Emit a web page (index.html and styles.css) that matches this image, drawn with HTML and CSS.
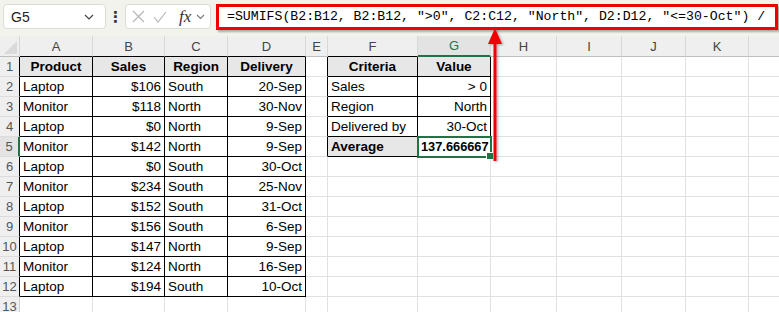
FILE: index.html
```html
<!DOCTYPE html>
<html lang="en">
<head>
    <meta charset="UTF-8">
    <title>SUMIFS average</title>
    <link rel="stylesheet" href="styles.css">
</head>
<body>
<div class="page">
    <!-- formula bar -->
    <div class="bar">
        <div class="namebox">
            <span>G5</span>
            <svg width="10" height="6" viewBox="0 0 10 6"><polyline points="1,1 5,5 9,1" fill="none" stroke="#444" stroke-width="1.2"/></svg>
        </div>
        <div class="dots">&#8942;</div>
        <div class="fxbox">
            <svg width="13" height="13" viewBox="0 0 13 13"><path d="M1 1 L12 12 M12 1 L1 12" stroke="#b4b4b4" stroke-width="1.1" fill="none"/></svg>
            <svg width="14" height="12" viewBox="0 0 14 12"><polyline points="1,6 5,11 13,1" fill="none" stroke="#b4b4b4" stroke-width="1.1"/></svg>
            <span class="fx">fx</span>
            <svg width="9" height="6" viewBox="0 0 9 6"><polyline points="1,1 4.5,4.5 8,1" fill="none" stroke="#777" stroke-width="1.1"/></svg>
        </div>
        <div class="formula">=SUMIFS(B2:B12, B2:B12, "&gt;0", C2:C12, "North", D2:D12, "&lt;=30-Oct") /</div>
    </div>

    <!-- sheet -->
    <div class="sheet">
        <div class="corner"><i></i></div>
        <div class="ch bb">A</div><div class="ch bb">B</div><div class="ch bb">C</div><div class="ch bb">D</div><div class="ch">E</div>
        <div class="ch bb">F</div><div class="ch on">G</div><div class="ch">H</div><div class="ch">I</div><div class="ch">J</div><div class="ch">K</div><div class="ch"></div>

        <div class="rn bl">1</div>
        <div class="c t th">Product</div><div class="c t th">Sales</div><div class="c t th">Region</div><div class="c t th">Delivery</div><div class="c bl"></div>
        <div class="c t th">Criteria</div><div class="c t th">Value</div>
        <div class="c"></div><div class="c"></div><div class="c"></div><div class="c"></div><div class="c"></div>

        <div class="rn bl">2</div>
        <div class="c t">Laptop</div><div class="c t r">$106</div><div class="c t">South</div><div class="c t r">20-Sep</div><div class="c bl"></div>
        <div class="c t">Sales</div><div class="c t r">&gt; 0</div>
        <div class="c"></div><div class="c"></div><div class="c"></div><div class="c"></div><div class="c"></div>

        <div class="rn bl">3</div>
        <div class="c t">Monitor</div><div class="c t r">$118</div><div class="c t">North</div><div class="c t r">30-Nov</div><div class="c bl"></div>
        <div class="c t">Region</div><div class="c t r">North</div>
        <div class="c"></div><div class="c"></div><div class="c"></div><div class="c"></div><div class="c"></div>

        <div class="rn bl">4</div>
        <div class="c t">Laptop</div><div class="c t r">$0</div><div class="c t">North</div><div class="c t r">9-Sep</div><div class="c bl"></div>
        <div class="c t">Delivered by</div><div class="c t r">30-Oct</div>
        <div class="c"></div><div class="c"></div><div class="c"></div><div class="c"></div><div class="c"></div>

        <div class="rn bl on">5</div>
        <div class="c t">Monitor</div><div class="c t r">$142</div><div class="c t">North</div><div class="c t r">9-Sep</div><div class="c bl"></div>
        <div class="c t th left">Average</div><div class="c t r b sel">137.666667</div>
        <div class="c"></div><div class="c"></div><div class="c"></div><div class="c"></div><div class="c"></div>

        <div class="rn bl">6</div>
        <div class="c t">Laptop</div><div class="c t r">$0</div><div class="c t">South</div><div class="c t r">30-Oct</div><div class="c"></div>
        <div class="c"></div><div class="c"></div>
        <div class="c"></div><div class="c"></div><div class="c"></div><div class="c"></div><div class="c"></div>

        <div class="rn bl">7</div>
        <div class="c t">Monitor</div><div class="c t r">$234</div><div class="c t">South</div><div class="c t r">25-Nov</div><div class="c"></div>
        <div class="c"></div><div class="c"></div>
        <div class="c"></div><div class="c"></div><div class="c"></div><div class="c"></div><div class="c"></div>

        <div class="rn bl">8</div>
        <div class="c t">Laptop</div><div class="c t r">$152</div><div class="c t">South</div><div class="c t r">31-Oct</div><div class="c"></div>
        <div class="c"></div><div class="c"></div>
        <div class="c"></div><div class="c"></div><div class="c"></div><div class="c"></div><div class="c"></div>

        <div class="rn bl">9</div>
        <div class="c t">Monitor</div><div class="c t r">$156</div><div class="c t">South</div><div class="c t r">6-Sep</div><div class="c"></div>
        <div class="c"></div><div class="c"></div>
        <div class="c"></div><div class="c"></div><div class="c"></div><div class="c"></div><div class="c"></div>

        <div class="rn bl">10</div>
        <div class="c t">Laptop</div><div class="c t r">$147</div><div class="c t">North</div><div class="c t r">9-Sep</div><div class="c"></div>
        <div class="c"></div><div class="c"></div>
        <div class="c"></div><div class="c"></div><div class="c"></div><div class="c"></div><div class="c"></div>

        <div class="rn bl">11</div>
        <div class="c t">Monitor</div><div class="c t r">$124</div><div class="c t">North</div><div class="c t r">16-Sep</div><div class="c"></div>
        <div class="c"></div><div class="c"></div>
        <div class="c"></div><div class="c"></div><div class="c"></div><div class="c"></div><div class="c"></div>

        <div class="rn bl">12</div>
        <div class="c t">Laptop</div><div class="c t r">$194</div><div class="c t">South</div><div class="c t r">10-Oct</div><div class="c"></div>
        <div class="c"></div><div class="c"></div>
        <div class="c"></div><div class="c"></div><div class="c"></div><div class="c"></div><div class="c"></div>

        <div class="rn">13</div>
        <div class="c"></div><div class="c"></div><div class="c"></div><div class="c"></div><div class="c"></div>
        <div class="c"></div><div class="c"></div>
        <div class="c"></div><div class="c"></div><div class="c"></div><div class="c"></div><div class="c"></div>
    </div>

    <!-- annotation arrow pointing at the formula -->
    <svg class="arrow" width="779" height="312" viewBox="0 0 779 312">
        <defs>
            <filter id="sh" x="-50%" y="-10%" width="200%" height="120%">
                <feDropShadow dx="1.5" dy="1" stdDeviation="0.8" flood-color="#000" flood-opacity="0.3"/>
            </filter>
        </defs>
        <g filter="url(#sh)">
            <line x1="495" y1="40" x2="495" y2="161" stroke="#f00000" stroke-width="3"/>
            <polygon points="495,28 488,44 502,44" fill="#f00000"/>
        </g>
    </svg>
</div>
</body>
</html>
```

FILE: styles.css
```css
* {
    margin: 0;
    padding: 0;
    box-sizing: border-box;
}
body {
    width: 779px;
    height: 312px;
    overflow: hidden;
    background-color: #ffffff;
    font-family: "Liberation Sans", "DejaVu Sans", sans-serif;
    color: #000000;
}
.page {
    position: relative;
}

/* formula bar */
.bar {
    height: 36px;
    background-color: #f3f3ee;
    display: flex;
    align-items: flex-start;
    padding: 4px 0 0 3px;
}
.namebox {
    width: 103px;
    height: 25px;
    background-color: #ffffff;
    border: 1px solid #dcdcd6;
    border-radius: 4px;
    display: flex;
    align-items: center;
    justify-content: space-between;
    padding: 0 11px 0 7px;
    font-size: 14px;
    color: #222;
}
.dots {
    width: 19px;
    height: 25px;
    display: flex;
    align-items: center;
    justify-content: center;
    font-size: 15px;
    font-weight: bold;
    color: #333;
}
.fxbox {
    width: 86px;
    height: 25px;
    background-color: #ffffff;
    border: 1px solid #dcdcd6;
    border-radius: 4px;
    display: flex;
    align-items: center;
    gap: 8px;
    padding-left: 6px;
}
.fx {
    font-family: "Liberation Serif", serif;
    font-style: italic;
    font-size: 17px;
    color: #333;
    margin-left: 4px;
    margin-right: -3px;
}
.formula {
    width: 562px;
    height: 26px;
    margin-left: 5px;
    background-color: #ffffff;
    border: 3px solid #f00000;
    box-shadow: 2px 2px 2px rgba(0,0,0,0.3);
    font-family: "Liberation Mono", "DejaVu Sans Mono", monospace;
    font-size: 13.2px;
    line-height: 19px;
    padding-left: 8px;
    white-space: nowrap;
    overflow: hidden;
}

/* sheet grid */
.sheet {
    display: grid;
    grid-template-columns: 20px 73px 72px 63px 78px 22px 90px 73px 66px 65px 64px 63px 64px;
    grid-template-rows: 21px;
    grid-auto-rows: 20px;
    width: 813px;
}
.corner {
    background-color: #efefef;
    border-right: 1px solid #d6d6d6;
    border-bottom: 1px solid #bdbdbd;
    display: flex;
    align-items: flex-end;
    justify-content: flex-end;
    padding: 0 2px 2px 0;
}
.corner i {
    width: 0;
    height: 0;
    border-left: 13px solid transparent;
    border-bottom: 13px solid #dadada;
}
.ch {
    background-color: #efefef;
    border-right: 1px solid #d8d8d8;
    border-bottom: 1px solid #bdbdbd;
    display: flex;
    align-items: center;
    justify-content: center;
    font-size: 13px;
    color: #444;
}
.ch.bb {
    border-bottom-color: #000;
}
.ch.on {
    background-color: #e3e3e3;
    color: #217346;
    border-bottom: 2px solid #217346;
}
.rn {
    background-color: #efefef;
    border-right: 1px solid #d0d0d0;
    border-bottom: 1px solid #dcdcdc;
    display: flex;
    align-items: center;
    justify-content: center;
    font-size: 13px;
    color: #555;
}
.rn.on {
    background-color: #e3e3e3;
}
.c {
    border-right: 1px solid #e1e1e1;
    border-bottom: 1px solid #e1e1e1;
    font-size: 13.5px;
    line-height: 19px;
    padding: 0 3px 0 3px;
    white-space: nowrap;
    overflow: hidden;
}
.c.t {
    border-right-color: #000;
    border-bottom-color: #000;
}
.bl {
    border-right-color: #000;
}
.rn.on.bl {
    border-right: 2px solid #217346;
}
.th {
    background-color: #e7e7e7;
    font-weight: bold;
    text-align: center;
}
.left {
    text-align: left;
}
.r {
    text-align: right;
}
.b {
    font-weight: bold;
}
.sel {
    position: relative;
    overflow: visible;
    outline: 2px solid #217346;
    outline-offset: -1px;
    font-size: 12.8px;
    padding-right: 4px;
}
.sel::after {
    content: "";
    position: absolute;
    right: -4px;
    bottom: -4px;
    width: 6px;
    height: 6px;
    background-color: #217346;
    border: 1px solid #ffffff;
}

.arrow {
    position: absolute;
    left: 0;
    top: 0;
    pointer-events: none;
}
```
